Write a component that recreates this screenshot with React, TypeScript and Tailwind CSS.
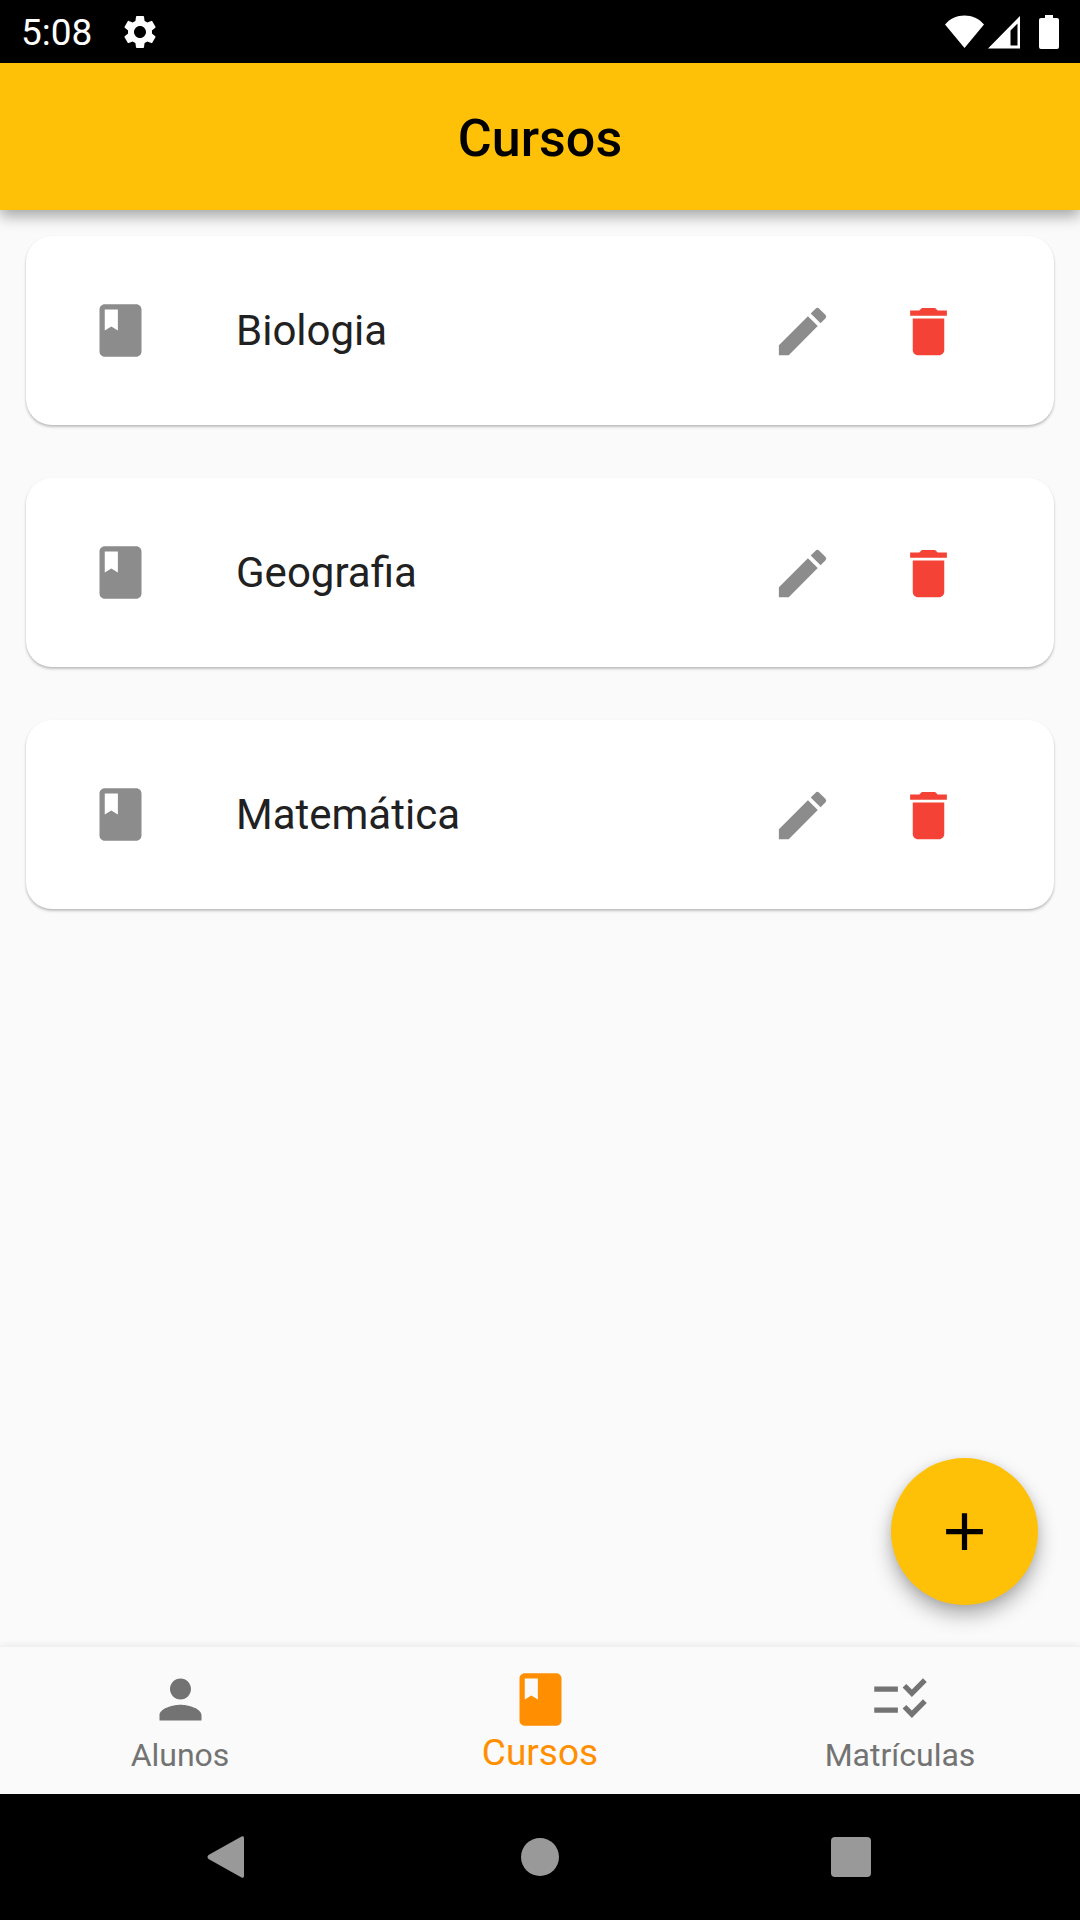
import React from "react";
import {
  MdAdd,
  MdChecklistRtl,
  MdClass,
  MdDelete,
  MdEdit,
  MdPerson,
  MdSettings,
} from "react-icons/md";

const courses = ["Biologia", "Geografia", "Matemática"];

function StatusBar() {
  return (
    <div className="flex h-[63px] items-center justify-between bg-black pr-[21px] pl-[21px] text-white">
      <div className="flex items-center gap-7">
        <time className="pt-0.5 text-[37px] leading-[61px]">5:08</time>
        <MdSettings className="size-10" aria-hidden="true" />
      </div>
      <div className="flex items-center gap-1" aria-hidden="true">
        <svg className="h-[34px] w-[39px]" viewBox="0 0 39 34" fill="currentColor">
          <path d="M0 9.5C5 3.5 12 .5 19.500 .5S34 3.500 39 9.500L19.500 33Z" />
        </svg>
        <svg className="mr-[15px] h-[34px] w-8" viewBox="0 0 32 34" fill="currentColor">
          <path fillRule="evenodd" d="M32 1V33.500H0ZM29.500 8.500L22.500 15.500V30.500H29.500Z" />
        </svg>
        <svg className="h-[34px] w-5" viewBox="0 0 20 34" fill="currentColor">
          <path d="M6 0h8v3h4a2 2 0 0 1 2 2v27a2 2 0 0 1-2 2H2a2 2 0 0 1-2-2V5a2 2 0 0 1 2-2h4Z" />
        </svg>
      </div>
    </div>
  );
}

function CourseCard({ name }: { name: string }) {
  return (
    <li className="flex h-[189px] items-center rounded-[26px] bg-white px-[63px] shadow-[0_2px_3px_rgba(0,0,0,0.22),0_1px_2px_rgba(0,0,0,0.06)]">
      <MdClass className="size-[63px] shrink-0 text-[#8c8c8c]" aria-hidden="true" />
      <span className="ml-[84px] min-w-0 flex-1 text-[42px] leading-[50px] text-[#212121]">{name}</span>
      <button
        type="button"
        aria-label={`Editar ${name}`}
        className="flex size-[126px] shrink-0 items-center justify-center pt-0.5 text-[#8c8c8c]"
      >
        <MdEdit className="size-[63px]" />
      </button>
      <button
        type="button"
        aria-label={`Excluir ${name}`}
        className="flex size-[126px] shrink-0 items-center justify-center pt-0.5 text-[#f44336]"
      >
        <MdDelete className="size-[63px]" />
      </button>
    </li>
  );
}

function BottomNav() {
  return (
    <nav className="grid h-[147px] grid-cols-3 bg-[#fafafa] text-[32px] text-[#737373] shadow-[0_-1px_8px_rgba(0,0,0,0.08)]">
      <button type="button" className="flex flex-col items-center pt-[21px]">
        <MdPerson className="size-[63px]" aria-hidden="true" />
        <span className="leading-[48px]">Alunos</span>
      </button>
      <button
        type="button"
        aria-current="page"
        className="flex flex-col items-center pt-[21px] text-[#ff8f00]"
      >
        <MdClass className="size-[63px]" aria-hidden="true" />
        <span className="text-[37px] leading-[44px]">Cursos</span>
      </button>
      <button type="button" className="flex flex-col items-center pt-[21px]">
        <MdChecklistRtl className="size-[63px]" aria-hidden="true" />
        <span className="leading-[48px]">Matrículas</span>
      </button>
    </nav>
  );
}

function SystemNav() {
  return (
    <div className="h-[126px] bg-black text-[#999999]">
      <div className="mx-auto grid h-full w-[86.4%] grid-cols-3 place-items-center">
        <button type="button" aria-label="Voltar">
          <svg className="h-[42px] w-11" viewBox="0 0 44 42" fill="currentColor">
            <path d="M34.500 .5Q37 -.5 37 2V40Q37 42.500 34.500 41.500L1.500 23Q-.500 21 1.500 19Z" />
          </svg>
        </button>
        <button type="button" aria-label="Início" className="size-[38px] rounded-full bg-[#999999]" />
        <button type="button" aria-label="Recentes" className="size-10 rounded bg-[#999999]" />
      </div>
    </div>
  );
}

export default function App() {
  return (
    <div className="flex min-h-screen flex-col bg-[#fafafa] font-[Roboto,sans-serif]">
      <StatusBar />
      <header className="relative flex h-[147px] items-center justify-center bg-[#ffc107] pt-1 shadow-[0_6px_14px_rgba(0,0,0,0.35)]">
        <h1 className="text-[52px] leading-[60px] font-medium text-black">Cursos</h1>
      </header>
      <main className="relative flex-1">
        <ul className="flex flex-col gap-[53px] p-[26px]">
          {courses.map((name) => (
            <CourseCard key={name} name={name} />
          ))}
        </ul>
        <button
          type="button"
          aria-label="Adicionar curso"
          className="absolute right-[42px] bottom-[42px] flex size-[147px] items-center justify-center rounded-full bg-[#ffc107] text-black shadow-[0_10px_20px_rgba(0,0,0,0.3),0_2px_10px_rgba(0,0,0,0.08)]"
        >
          <MdAdd className="size-[63px]" />
        </button>
      </main>
      <BottomNav />
      <SystemNav />
    </div>
  );
}
